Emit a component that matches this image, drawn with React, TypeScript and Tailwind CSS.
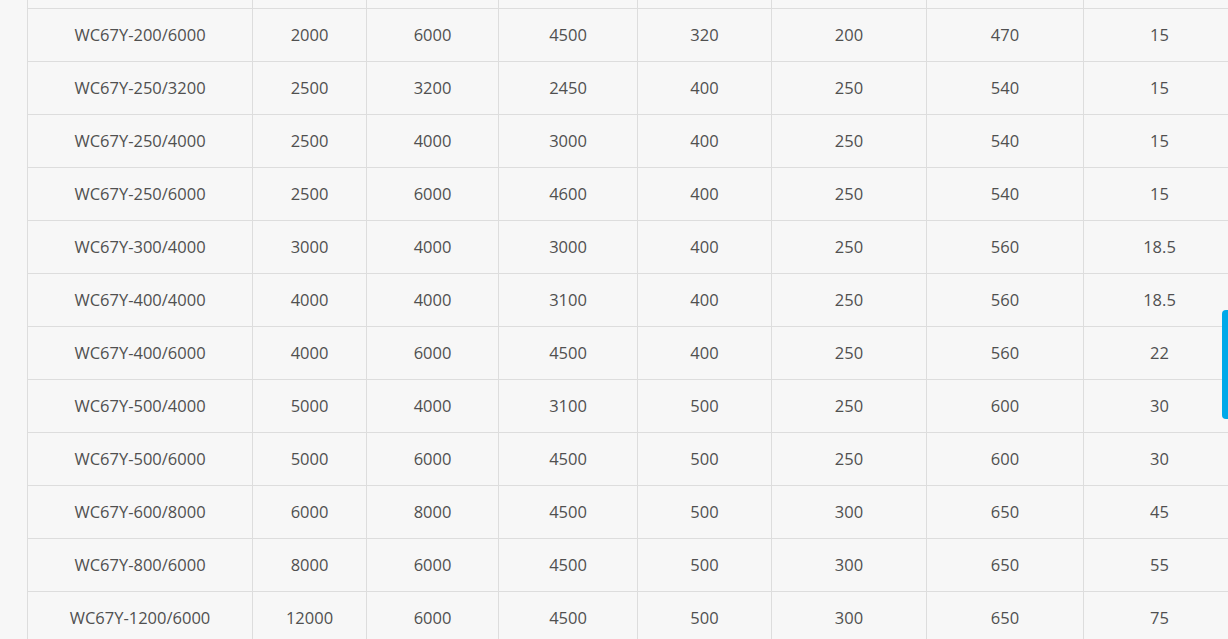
const cols = ['w-[225px]', 'w-[114px]', 'w-[132px]', 'w-[139px]', 'w-[134px]', 'w-[155px]', 'w-[157px]', 'w-[152px]'];

const rows = [
  ['WC67Y-200/6000', '2000', '6000', '4500', '320', '200', '470', '15'],
  ['WC67Y-250/3200', '2500', '3200', '2450', '400', '250', '540', '15'],
  ['WC67Y-250/4000', '2500', '4000', '3000', '400', '250', '540', '15'],
  ['WC67Y-250/6000', '2500', '6000', '4600', '400', '250', '540', '15'],
  ['WC67Y-300/4000', '3000', '4000', '3000', '400', '250', '560', '18.5'],
  ['WC67Y-400/4000', '4000', '4000', '3100', '400', '250', '560', '18.5'],
  ['WC67Y-400/6000', '4000', '6000', '4500', '400', '250', '560', '22'],
  ['WC67Y-500/4000', '5000', '4000', '3100', '500', '250', '600', '30'],
  ['WC67Y-500/6000', '5000', '6000', '4500', '500', '250', '600', '30'],
  ['WC67Y-600/8000', '6000', '8000', '4500', '500', '300', '650', '45'],
  ['WC67Y-800/6000', '8000', '6000', '4500', '500', '300', '650', '55'],
  ['WC67Y-1200/6000', '12000', '6000', '4500', '500', '300', '650', '75'],
];

export default function App() {
  return (
    <div className="relative h-[639px] w-[1228px] overflow-hidden bg-[#f7f7f7] font-['Open_Sans','Noto_Sans',sans-serif] text-[#505050]">
      <div className="ml-[27px] w-[1209px] border-l border-[#dddddd]">
        {/* partial row cut off at the top */}
        <div className="flex h-[9px] border-b border-[#dddddd]">
          {cols.map((w, i) => (
            <div key={i} className={`${w} shrink-0 border-r border-[#dddddd]`} />
          ))}
        </div>
        {rows.map((r, ri) => (
          <div key={ri} className="flex h-[53px] border-b border-[#dddddd]">
            {r.map((c, i) => (
              <div
                key={i}
                className={`${cols[i]} flex shrink-0 items-center justify-center border-r border-[#dddddd] text-[16.5px]`}
              >
                {c}
              </div>
            ))}
          </div>
        ))}
      </div>
      {/* floating side tab */}
      <div className="absolute right-0 top-[310px] h-[109px] w-[6px] rounded-l-[4px] bg-[#00a9e9]" />
    </div>
  );
}
